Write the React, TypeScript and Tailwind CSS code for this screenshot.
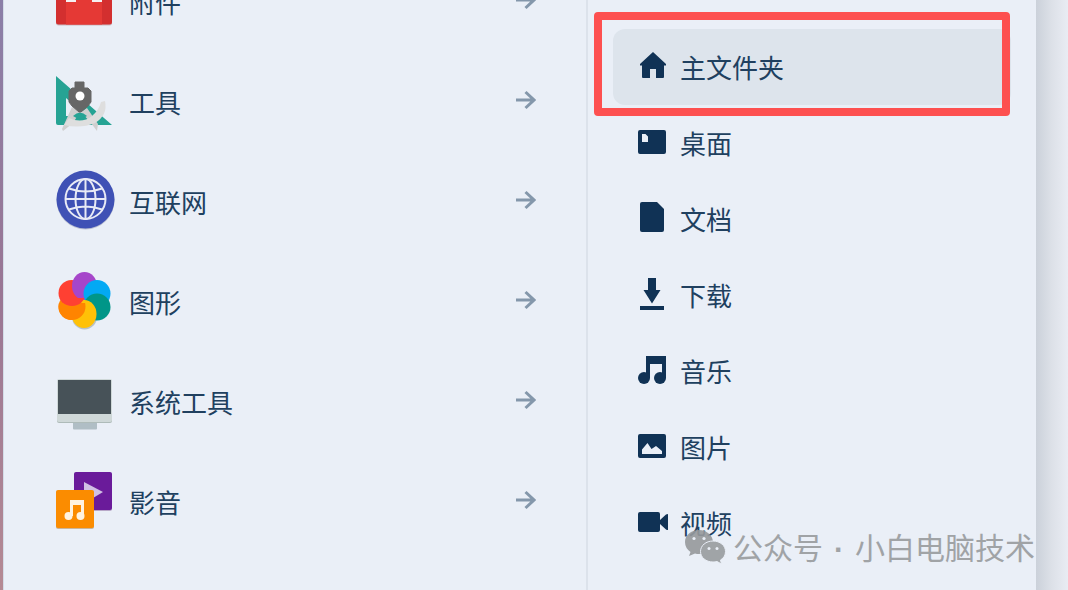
import { useState } from 'react'
import type { ReactNode } from 'react'

type Item = {
  label: string
  icon: ReactNode
}

const categories: Item[] = [
  {
    label: '附件',
    icon: (
      <>
        <rect x="1" y="2" width="56" height="53.5" rx="2.5" fill="#c9b9bf" />
        <rect x="1" y="1" width="56" height="53.5" rx="2.5" fill="#d32f2f" />
        <path d="M11 1h36v53.500H11z" fill="#e53935" />
        <path d="M11 24h10v8H11zM37 24h10v8H37z" fill="#f5f0f2" />
      </>
    ),
  },
  {
    label: '工具',
    icon: (
      <>
        <path fillRule="evenodd" d="M1 6L57 55H3q-2 0-2-2zM11 28v18h20z" fill="#26a394" />
        <path d="M17 37l8 5-7 11-10 8-1-2zM26 42l6-4 11 16-1 7-6-8z" fill="#cfcfcf" />
        <path d="M14 48Q27 54 37 46Q44 40 46 32l4-1Q53 45 40 53Q26 59 9 55z" fill="#dedede" />
        <path d="M18 46q7-7 14 0-7 5-14 0z" fill="#26a394" />
        <path d="M20 12h9v6h4l3 3v11l-3 4-7 6h-2l-7-6-3-4V21l3-3h3z" fill="#666" stroke="#666" strokeLinejoin="round" />
        <circle cx="25" cy="26" r="4.500" fill="#fff" />
      </>
    ),
  },
  {
    label: '互联网',
    icon: (
      <>
        <circle cx="30.500" cy="30.500" r="29" fill="#bcc1d2" />
        <circle cx="30.500" cy="29.500" r="29" fill="#3f51b5" />
        <g fill="none" stroke="#e8eaf6" strokeWidth="2">
          <circle cx="30.500" cy="29" r="20" />
          <ellipse cx="30.500" cy="29" rx="10" ry="20" />
          <path d="M30.500 8.500v41M10 29h41M14 18.500q16.500 6 33 0M14 39.500q16.500-6 33 0" />
        </g>
      </>
    ),
  },
  {
    label: '图形',
    icon: (
      <>
        <clipPath id="petal-orange">
          <path d="M0 33h60v27H0z" />
        </clipPath>
        <clipPath id="petal-red">
          <path d="M0 28h60v20H0z" />
        </clipPath>
        <circle cx="29.500" cy="47" r="12.500" fill="#b9c2c6" />
        <circle cx="16.500" cy="37" r="13" fill="#ff8400" />
        <circle cx="16.500" cy="23" r="13" fill="#ff4032" />
        <ellipse cx="29.500" cy="16" rx="12.500" ry="14" fill="#a646ca" />
        <circle cx="42" cy="23.500" r="13.500" fill="#03a9f4" />
        <circle cx="42" cy="37" r="13.500" fill="#009688" />
        <ellipse cx="29" cy="44" rx="12.500" ry="14" fill="#ffc107" />
        <circle cx="17" cy="36.500" r="13.500" fill="#ff8400" clipPath="url(#petal-orange)" />
        <ellipse cx="17" cy="23" rx="13.500" ry="13" fill="#ff4032" clipPath="url(#petal-red)" />
      </>
    ),
  },
  {
    label: '系统工具',
    icon: (
      <>
        <rect x="18" y="50" width="24" height="9.500" rx="1" fill="#b0bec5" />
        <rect x="2" y="10" width="55" height="43" rx="2" fill="#aebbb9" />
        <rect x="2" y="9" width="55" height="43" rx="2" fill="#cfd8d8" />
        <rect x="3" y="10" width="53" height="34" fill="#475258" />
      </>
    ),
  },
  {
    label: '影音',
    icon: (
      <>
        <rect x="19" y="3" width="38" height="38" rx="2" fill="#b8a8c8" />
        <rect x="19" y="2" width="38" height="38" rx="2" fill="#6a1b9a" />
        <path d="M29 12v16h9l10-6z" fill="#d1c0e4" />
        <rect x="1" y="21" width="38" height="38" rx="2" fill="#c9b49a" />
        <rect x="1" y="20" width="38" height="38" rx="2" fill="#fb8c00" />
        <path d="M15 30h14v16h-3V35h-8v11h-3z" fill="#fff3e0" />
        <circle cx="13.500" cy="46" r="4" fill="#fff3e0" />
        <circle cx="25.500" cy="46" r="4" fill="#fff3e0" />
      </>
    ),
  },
]

const places: Item[] = [
  {
    label: '主文件夹',
    icon: <path d="M17 1l13 12v1.500h-2V26q0 1-1 1h-7v-9h-6v9H7q-1 0-1-1V14.500H4V13z" />,
  },
  {
    label: '桌面',
    icon: (
      <path
        fillRule="evenodd"
        d="M4 3h24q2 0 2 2v20q0 2-2 2H4q-2 0-2-2V5q0-2 2-2zM6 7v8h6v-5.500L9.500 7z"
      />
    ),
  },
  {
    label: '文档',
    icon: <path d="M6-1h15l7 7v21q0 2-2 2H6q-2 0-2-2V1q0-2 2-2z" />,
  },
  {
    label: '下载',
    icon: <path d="M12-1h8v12h4.500L16 24.500 7.500 11H12zM4 27h24v4H4z" />,
  },
  {
    label: '音乐',
    icon: (
      <>
        <path d="M10 1h20v22h-4V9H14v14h-4z" />
        <circle cx="8" cy="23" r="6" />
        <circle cx="24" cy="23" r="6" />
      </>
    ),
  },
  {
    label: '图片',
    icon: (
      <path
        fillRule="evenodd"
        d="M4 3h24q2 0 2 2v20q0 2-2 2H4q-2 0-2-2V5q0-2 2-2zM6 23h20v-3l-6-5-4.500 3-4-6L6 18.500z"
      />
    ),
  },
  {
    label: '视频',
    icon: <path d="M4 5h18q2 0 2 2v6l6-5.500q2-1 2 0v15q0 1-2 0L24 17v6q0 2-2 2H4q-2 0-2-2V7q0-2 2-2z" />,
  },
]

function ArrowIcon() {
  return (
    <svg viewBox="0 0 20 20" className="size-5 shrink-0" fill="none" stroke="#8497ab" strokeWidth="3" aria-hidden="true">
      <path d="M0 10h18M9.500 2l8.500 8-8.500 8" />
    </svg>
  )
}

function WechatIcon() {
  return (
    <svg viewBox="0 0 42 36" className="h-9 w-[42px] shrink-0 opacity-90" aria-hidden="true">
      <path d="M14 0C6 0 0 5 0 12q0 6 5.500 10L4 26l6-2.500q2 .5 4 .5c8 0 14-6 14-12S22 0 14 0z" fill="#96999c" />
      <path
        d="M28 11c-7 0-12.500 4.500-12.500 10.500S21 32 28 32q2 0 4-.5l4.500 2.500-1-4q5-3 5-8.500C40.500 15.500 35 11 28 11z"
        fill="#999c9f"
        stroke="#eaeff7"
        strokeWidth="1"
      />
      <g fill="#eaeff7">
        <circle cx="9" cy="8.500" r="1.600" />
        <circle cx="19" cy="8.500" r="1.600" />
        <circle cx="24" cy="18.500" r="1.500" />
        <circle cx="32" cy="18.500" r="1.500" />
      </g>
    </svg>
  )
}

export default function App() {
  const [selected, setSelected] = useState('主文件夹')

  return (
    <div className="relative flex min-h-screen overflow-hidden bg-[#eaeff7] font-['Noto_Sans_CJK_SC',sans-serif] text-[26px] leading-8 text-[#20405f]">
      <div className="w-[3px] shrink-0 bg-linear-to-b from-[#8b7fa8] via-[#9a7694] to-[#b58a94]" />

      <div className="grid flex-1 grid-cols-[583fr_450fr]">
        <nav className="-mt-[50px] border-l border-[#d3dde8]">
          {categories.map((item) => (
            <button key={item.label} className="flex h-[100px] w-full items-center pr-[50px] pl-[51px] text-left">
              <svg viewBox="0 0 60 60" className="size-[60px] shrink-0 overflow-visible" aria-hidden="true">
                {item.icon}
              </svg>
              <span className="flex-1 pt-[3px] pl-3.5">{item.label}</span>
              <ArrowIcon />
            </button>
          ))}
        </nav>

        <nav className="border-l-2 border-[#dce2eb] px-[25px] pt-[29px]">
          {places.map((item) => (
            <div key={item.label} className="relative">
              <button
                onClick={() => setSelected(item.label)}
                className={`flex h-[76px] w-full items-center rounded-xl pl-[23px] text-left ${
                  selected === item.label ? 'bg-[#dde4ec]' : ''
                }`}
              >
                <svg viewBox="0 0 32 32" className="size-8 shrink-0 overflow-visible" fill="#103255" aria-hidden="true">
                  {item.icon}
                </svg>
                <span className="pl-3">{item.label}</span>
              </button>
              {item.label === '主文件夹' && (
                <div className="pointer-events-none absolute -top-[17px] right-[1px] -bottom-[11px] -left-[19px] rounded border-8 border-[#fd5050]" />
              )}
            </div>
          ))}
        </nav>
      </div>

      <div className="w-8 shrink-0 bg-linear-to-r from-[#cbd1da] via-[#dde1e8] to-[#e9ecf3]" />

      <div className="pointer-events-none absolute right-[33px] bottom-[22px] flex items-center text-[30px] leading-9 text-[#a0a3a6]">
        <WechatIcon />
        <div className="flex pl-1.5">
          <span>公众号</span>
          <span className="w-8 pt-1 text-center font-['Liberation_Sans',sans-serif] font-bold">·</span>
          <span>小白电脑技术</span>
        </div>
      </div>
    </div>
  )
}
